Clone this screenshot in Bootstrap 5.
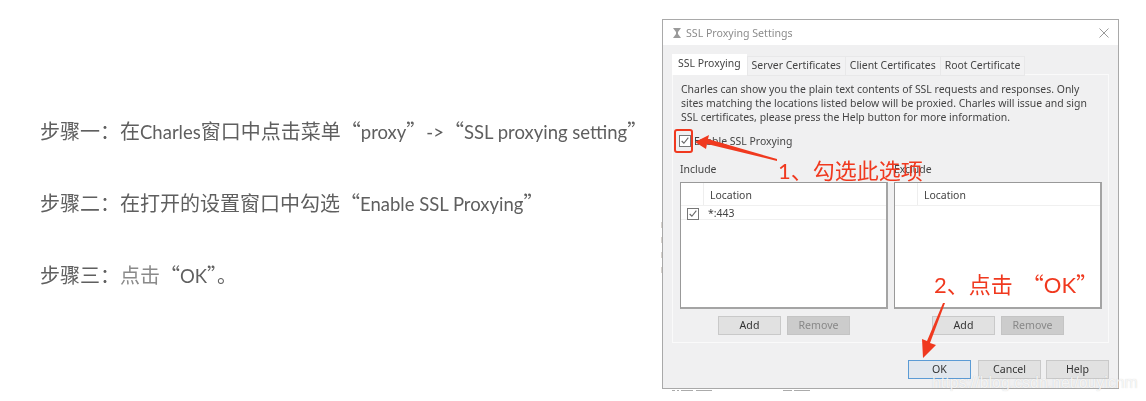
<!DOCTYPE html>
<html lang="zh-CN">
<head>
<meta charset="utf-8">
<title>SSL Proxying</title>
<link href="https://cdn.jsdelivr.net/npm/bootstrap@5.3.0/dist/css/bootstrap.min.css" rel="stylesheet">
<style>
html,body{margin:0;background:#fff;}
.stage{width:1146px;height:401px;overflow:hidden;position:relative;}
.steps{width:662px;padding-left:40px;padding-top:118px;gap:46px;font:20px/26px "Noto Sans CJK SC",sans-serif;color:#5f5f5f;filter:blur(.35px);flex:none;}
.steps p{margin:0;white-space:nowrap;height:26px;}
.lat{font-family:Lato,sans-serif;font-size:18.5px;}
.soft{color:#8a8a8a;}
.dlg{width:457px;height:370px;margin-top:19px;background:#f0f0f1;border:1px solid #a9a9a9;font:10.45px/14px "Noto Sans",sans-serif;color:#444;filter:blur(.35px);flex:none;}
.ttl{height:25px;background:#fff;padding:0 9px;gap:4px;color:#8c8c8c;font-size:10.6px;}
.ttl .xbtn{margin-left:auto;}
.tabs{padding:0 9px;height:29px;border:0;gap:1px;align-items:flex-end;flex-wrap:nowrap;}
.tabs .nav-link{color:#444;border:0;border-radius:0;padding:0 4px;height:18px;line-height:17px;background:#f2f2f3;outline:1px solid #e8e8e9;font-size:10.45px;white-space:nowrap;}
.tabs .nav-link.active{height:21px;line-height:18px;background:#fff;color:#444;padding:0 6px;outline:0;}
.pane{margin:0 9px;height:269px;border:1px solid #fafafa;padding:7px 6px 0;}
.desc{margin:0 0 0 2px;width:412px;line-height:14px;}
.chk{margin:9px 0 0;gap:3px;height:16px;}
.box{width:12px;height:12px;border:1px solid #777;background:#fff;flex:none;}
.inc{margin-top:13px;gap:6px;margin-left:1px;}
.side{width:208px;}
.side .lbl{height:15px;}
.tbl{margin-top:5px;height:127px;border:1px solid #999;border-right:2px solid #a4a4a4;border-bottom:2px solid #a4a4a4;background:#fff;}
.thd{height:23px;border-bottom:1px solid #f0f0f0;}
.c1{width:23px;flex:none;border-right:1px solid #eee;}
.thd .c2{padding:1px 0 0 6px;}
.trw{height:14px;border-bottom:1px solid #f0f0f0;}
.trw .c1{border:0;padding:2px 0 0 6px;}
.trw .c2{padding-left:4px;line-height:15px;}
.acts{margin-top:7px;gap:6px;justify-content:center;}
.wbtn{width:63px;height:19px;padding:0;border-radius:0;font:10.6px/17px "Noto Sans",sans-serif;background:#e1e1e1;border:1px solid #c9c9c9;color:#333;}
.wbtn.off,.wbtn.off:disabled{background:#ccc;border-color:#c4c4c4;color:#888;opacity:1;}
.wbtn.pri{background:#e1e7ee;border:1px solid #5b9bd5;}
.foot{padding:17px 9px 0;gap:7px;justify-content:flex-end;}
.foot .wbtn:last-child{margin-left:-2px;}
.note{color:#f0391f;font-family:"Noto Sans CJK SC",sans-serif;font-size:22px;line-height:28px;white-space:nowrap;filter:blur(.3px);}
.note .nlat{font-family:Lato,sans-serif;font-size:22px;}
.note .gapq{margin-left:9px;}
.n1{left:778px;top:155px;}
.n2{left:934px;top:269px;}
.ring{left:674px;top:129px;width:19px;height:24px;border:2px solid #f0391f;border-radius:3px;}
.arrows{left:0;top:0;}
.mark-w{left:932px;top:373px;font:15.9px/20px "Liberation Sans",sans-serif;color:rgba(255,255,255,.8);text-shadow:0 0 1px rgba(120,120,120,.35);white-space:nowrap;}
</style>
</head>
<body>
<div class="stage d-flex">
  <div class="steps d-flex flex-column">
    <p>步骤一：在<span class="lat">Charles</span>窗口中点击菜单“<span class="lat">proxy</span>”<span class="lat">-&gt;</span>“<span class="lat">SSL proxying setting</span>”</p>
    <p>步骤二：在打开的设置窗口中勾选“<span class="lat">Enable SSL Proxying</span>”</p>
    <p>步骤三：<span class="soft">点击</span>“<span class="lat">OK</span>”。</p>
  </div>
  <div class="dlg">
    <div class="ttl d-flex align-items-center">
      <svg width="10" height="12" viewBox="0 0 10 12"><path d="M1 1h8L6 5v2l3 4H1l3-4V5z" fill="#9a9a9a"/></svg>
      <span>SSL Proxying Settings</span>
      <svg class="xbtn" width="10" height="10" viewBox="0 0 10 10"><path d="M.5.5l9 9M9.5.5l-9 9" stroke="#9a9a9a" fill="none"/></svg>
    </div>
    <ul class="nav nav-tabs tabs">
      <li class="nav-item"><a class="nav-link active" href="#">SSL Proxying</a></li>
      <li class="nav-item"><a class="nav-link" href="#">Server Certificates</a></li>
      <li class="nav-item"><a class="nav-link" href="#">Client Certificates</a></li>
      <li class="nav-item"><a class="nav-link" href="#">Root Certificate</a></li>
    </ul>
    <div class="pane">
      <p class="desc">Charles can show you the plain text contents of SSL requests and responses. Only sites matching the locations listed below will be proxied. Charles will issue and sign SSL certificates, please press the Help button for more information.</p>
      <div class="chk d-flex align-items-center">
        <span class="box d-flex"><svg width="10" height="10" viewBox="0 0 9 9"><path d="M1.5 4.5l2 2 4-5" stroke="#666" fill="none"/></svg></span>
        <span>Enable SSL Proxying</span>
      </div>
      <div class="inc d-flex">
        <div class="side">
          <div class="lbl">Include</div>
          <div class="tbl">
            <div class="thd d-flex"><div class="c1"></div><div class="c2 d-flex align-items-center">Location</div></div>
            <div class="trw d-flex"><div class="c1"><span class="box d-flex"><svg width="10" height="10" viewBox="0 0 9 9"><path d="M1.5 4.5l2 2 4-5" stroke="#666" fill="none"/></svg></span></div><div class="c2">*:443</div></div>
          </div>
          <div class="acts d-flex"><button class="btn wbtn">Add</button><button class="btn wbtn off" disabled>Remove</button></div>
        </div>
        <div class="side">
          <div class="lbl">Exclude</div>
          <div class="tbl">
            <div class="thd d-flex"><div class="c1"></div><div class="c2 d-flex align-items-center">Location</div></div>
          </div>
          <div class="acts d-flex"><button class="btn wbtn">Add</button><button class="btn wbtn off" disabled>Remove</button></div>
        </div>
      </div>
    </div>
    <div class="foot d-flex"><button class="btn wbtn pri">OK</button><button class="btn wbtn">Cancel</button><button class="btn wbtn">Help</button></div>
  </div>

  <div class="position-absolute ring"></div>
  <svg class="position-absolute arrows" width="1146" height="401" viewBox="0 0 1146 401">
    <path d="M695 142l14-7-1 4 69 20 0 2-70-17-1 5z" fill="#f0391f"/>
    <path d="M945 303l-15 40 6 2-13 13-1-19 5 2 16-38z" fill="#f0391f"/>
    <path d="M672 390.5h3M677 390.5h2M681 390.5h12M696 390.5h16M783 390.5h9M794 390.5h16" stroke="#888" fill="none" opacity=".7"/>
    <path d="M661.5 222v60" stroke="#7a6a5a" stroke-dasharray="6 9" opacity=".3" fill="none"/>
  </svg>
  <div class="position-absolute note n1"><span class="nlat">1</span>、勾选此选项</div>
  <div class="position-absolute note n2"><span class="nlat">2</span>、点击<span class="gapq">“</span><span class="nlat">OK</span>”</div>
  <div class="position-absolute mark-w">https://blog.csdn.net/ouyicnm</div>
</div>
</body>
</html>
